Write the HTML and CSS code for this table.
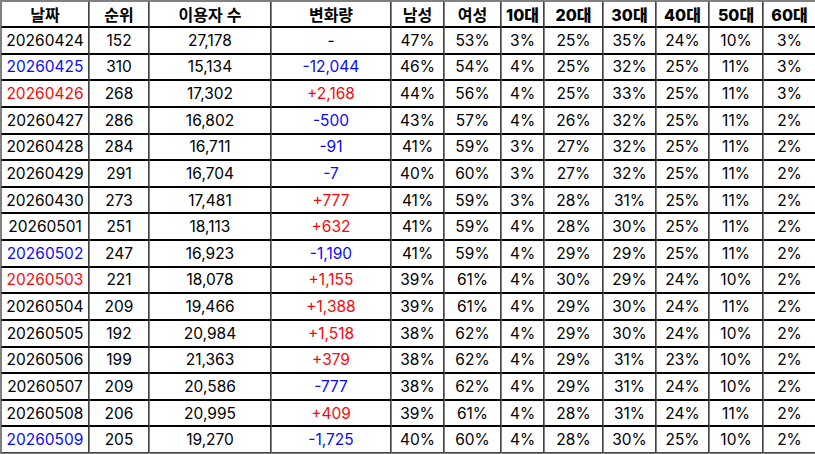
FILE: index.html
```html
<!DOCTYPE html>
<html lang="ko">
<head>
<meta charset="utf-8">
<link rel="stylesheet" href="styles.css">
</head>
<body>
<table class="stats">
<colgroup>
<col style="width:88px"><col style="width:60px"><col style="width:122px"><col style="width:120px"><col style="width:53px"><col style="width:57px"><col style="width:43px"><col style="width:59px"><col style="width:53px"><col style="width:53px"><col style="width:54px"><col style="width:53px">
</colgroup>
<thead>
<tr><th>날짜</th><th>순위</th><th>이용자 수</th><th>변화량</th><th>남성</th><th>여성</th><th class="age">10대</th><th class="age">20대</th><th class="age">30대</th><th class="age">40대</th><th class="age">50대</th><th class="age">60대</th></tr>
</thead>
<tbody>
<tr><td>20260424</td><td>152</td><td>27,178</td><td>-</td><td>47%</td><td>53%</td><td>3%</td><td>25%</td><td>35%</td><td>24%</td><td>10%</td><td>3%</td></tr>
<tr><td class="blue">20260425</td><td>310</td><td>15,134</td><td class="blue">-12,044</td><td>46%</td><td>54%</td><td>4%</td><td>25%</td><td>32%</td><td>25%</td><td>11%</td><td>3%</td></tr>
<tr><td class="red">20260426</td><td>268</td><td>17,302</td><td class="red">+2,168</td><td>44%</td><td>56%</td><td>4%</td><td>25%</td><td>33%</td><td>25%</td><td>11%</td><td>3%</td></tr>
<tr><td>20260427</td><td>286</td><td>16,802</td><td class="blue">-500</td><td>43%</td><td>57%</td><td>4%</td><td>26%</td><td>32%</td><td>25%</td><td>11%</td><td>2%</td></tr>
<tr><td>20260428</td><td>284</td><td>16,711</td><td class="blue">-91</td><td>41%</td><td>59%</td><td>3%</td><td>27%</td><td>32%</td><td>25%</td><td>11%</td><td>2%</td></tr>
<tr><td>20260429</td><td>291</td><td>16,704</td><td class="blue">-7</td><td>40%</td><td>60%</td><td>3%</td><td>27%</td><td>32%</td><td>25%</td><td>11%</td><td>2%</td></tr>
<tr><td>20260430</td><td>273</td><td>17,481</td><td class="red">+777</td><td>41%</td><td>59%</td><td>3%</td><td>28%</td><td>31%</td><td>25%</td><td>11%</td><td>2%</td></tr>
<tr><td>20260501</td><td>251</td><td>18,113</td><td class="red">+632</td><td>41%</td><td>59%</td><td>4%</td><td>28%</td><td>30%</td><td>25%</td><td>11%</td><td>2%</td></tr>
<tr><td class="blue">20260502</td><td>247</td><td>16,923</td><td class="blue">-1,190</td><td>41%</td><td>59%</td><td>4%</td><td>29%</td><td>29%</td><td>25%</td><td>11%</td><td>2%</td></tr>
<tr><td class="red">20260503</td><td>221</td><td>18,078</td><td class="red">+1,155</td><td>39%</td><td>61%</td><td>4%</td><td>30%</td><td>29%</td><td>24%</td><td>10%</td><td>2%</td></tr>
<tr><td>20260504</td><td>209</td><td>19,466</td><td class="red">+1,388</td><td>39%</td><td>61%</td><td>4%</td><td>29%</td><td>30%</td><td>24%</td><td>11%</td><td>2%</td></tr>
<tr><td>20260505</td><td>192</td><td>20,984</td><td class="red">+1,518</td><td>38%</td><td>62%</td><td>4%</td><td>29%</td><td>30%</td><td>24%</td><td>10%</td><td>2%</td></tr>
<tr><td>20260506</td><td>199</td><td>21,363</td><td class="red">+379</td><td>38%</td><td>62%</td><td>4%</td><td>29%</td><td>31%</td><td>23%</td><td>10%</td><td>2%</td></tr>
<tr><td>20260507</td><td>209</td><td>20,586</td><td class="blue">-777</td><td>38%</td><td>62%</td><td>4%</td><td>29%</td><td>31%</td><td>24%</td><td>10%</td><td>2%</td></tr>
<tr><td>20260508</td><td>206</td><td>20,995</td><td class="red">+409</td><td>39%</td><td>61%</td><td>4%</td><td>28%</td><td>31%</td><td>24%</td><td>11%</td><td>2%</td></tr>
<tr><td class="blue">20260509</td><td>205</td><td>19,270</td><td class="blue">-1,725</td><td>40%</td><td>60%</td><td>4%</td><td>28%</td><td>30%</td><td>25%</td><td>10%</td><td>2%</td></tr>
</tbody>
</table>
</body>
</html>
```
FILE: styles.css
```css
html, body {
  margin: 0;
  padding: 0;
  background: #fff;
}
.stats {
  width: 815px;
  height: 454px;
  table-layout: fixed;
  border-collapse: separate;
  border-spacing: 0;
  border: 1px solid #808080;
  font-family: "Inter", "Noto Sans CJK KR", sans-serif;
  font-size: 15.5px;
  color: #000;
}
.stats th, .stats td {
  padding: 0;
  text-align: center;
  border-left: 1px solid #808080;
  border-right: 1px solid #444;
  border-top: 1px solid #000;
  border-bottom: 1px solid #000;
  white-space: nowrap;
  overflow: hidden;
}
.stats th {
  font-size: 16px;
  font-weight: 600;
  border-top-color: #808080;
}
.stats th.age {
  font-weight: 800;
}
.stats tbody tr:last-child td {
  border-bottom-color: #444;
}
.blue { color: #0a0af5; }
.red { color: #f50a0a; }
```
